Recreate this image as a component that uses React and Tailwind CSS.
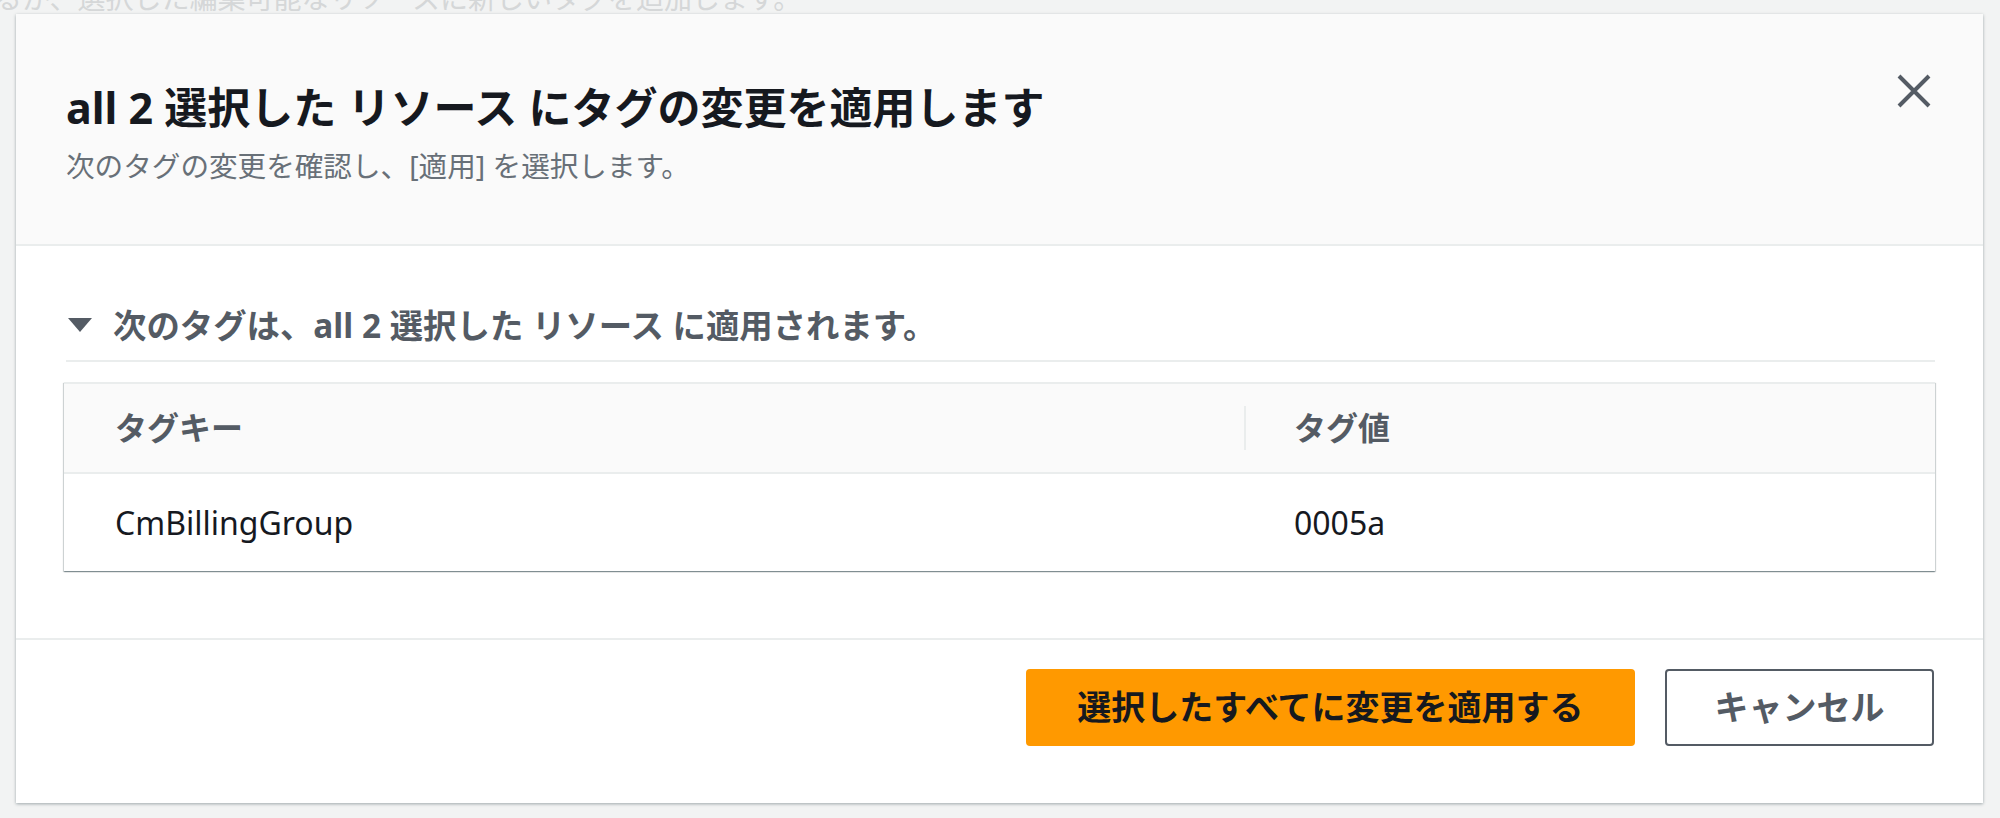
import React from "react";

const FONT = { fontFamily: '"Noto Sans", "Noto Sans CJK JP", sans-serif' };

export default function App() {
  return (
    <div className="relative w-[2000px] h-[818px] overflow-hidden bg-[#f2f3f3]" style={FONT}>
      {/* faint background page */}
      <div className="-mt-[22px] -ml-[6px] text-[28px] leading-[40px] text-[#d5d7d8] whitespace-nowrap">
        るか、選択した編集可能なリソースに新しいタグを追加します。
      </div>

      {/* modal */}
      <div className="absolute left-[16px] top-[14px] w-[1967px] h-[789px] bg-white flex flex-col shadow-[0_1px_3px_rgba(0,28,36,0.35)]">
        {/* header */}
        <div className="relative bg-[#fafafa] border-b-2 border-[#eaeded] pl-[50px] pr-[48px] pt-[66px] pb-[58px]">
          <h2 className="text-[43px] leading-[56px] font-bold text-[#16191f]">
            all 2 選択した リソース にタグの変更を適用します
          </h2>
          <p className="mt-[10px] text-[28.6px] leading-[40px] text-[#687078]">
            次のタグの変更を確認し、[適用] を選択します。
          </p>
          <button className="absolute left-[1880px] top-[59px] w-[36px] h-[36px] flex items-center justify-center">
            <svg width="34" height="34" viewBox="0 0 34 34">
              <path d="M2 2 L32 32 M32 2 L2 32" stroke="#545b64" strokeWidth="4" strokeLinecap="butt" />
            </svg>
          </button>
        </div>

        {/* body */}
        <div className="pl-[50px] pr-[48px] pt-[57px] pb-[67px]">
          <div className="flex items-center h-[44px]">
            <svg width="24" height="14" viewBox="0 0 24 14" className="ml-[2px]">
              <polygon points="0,0 24,0 12,14" fill="#545b64" />
            </svg>
            <span className="ml-[21px] text-[33.4px] leading-[44px] font-bold text-[#545b64]">
              次のタグは、all 2 選択した リソース に適用されます。
            </span>
          </div>
          <div className="mt-[13px] h-[2px] bg-[#eaeded]" />

          {/* table */}
          <div className="mt-[20px] -ml-[2px] bg-white border-t-2 border-[#eaeded] shadow-[0_1px_1px_0_rgba(0,28,36,0.3),1px_1px_1px_0_rgba(0,28,36,0.15),-1px_1px_1px_0_rgba(0,28,36,0.15)]">
            <div className="flex h-[90px] items-center bg-[#fafafa] border-b-2 border-[#eaeded]">
              <div className="w-[1180px] pl-[51px] text-[32px] font-bold text-[#545b64]">タグキー</div>
              <div className="w-[2px] h-[44px] bg-[#eaeded]" />
              <div className="flex-1 pl-[48px] text-[32px] font-bold text-[#545b64]">タグ値</div>
            </div>
            <div className="flex h-[97px] items-center">
              <div className="w-[1182px] pl-[51px] text-[32px] text-[#16191f]">CmBillingGroup</div>
              <div className="flex-1 pl-[48px] text-[32px] text-[#16191f]">0005a</div>
            </div>
          </div>
        </div>

        {/* footer */}
        <div className="border-t-2 border-[#eaeded] flex justify-end gap-[30px] pr-[49px] pt-[29px]">
          <button className="h-[77px] w-[609px] rounded-[4px] bg-[#ff9900] text-[34px] font-bold text-[#16191f]">
            選択したすべてに変更を適用する
          </button>
          <button className="h-[77px] w-[269px] rounded-[4px] border-2 border-[#545b64] bg-white text-[34px] font-bold text-[#545b64]">
            キャンセル
          </button>
        </div>
      </div>
    </div>
  );
}
